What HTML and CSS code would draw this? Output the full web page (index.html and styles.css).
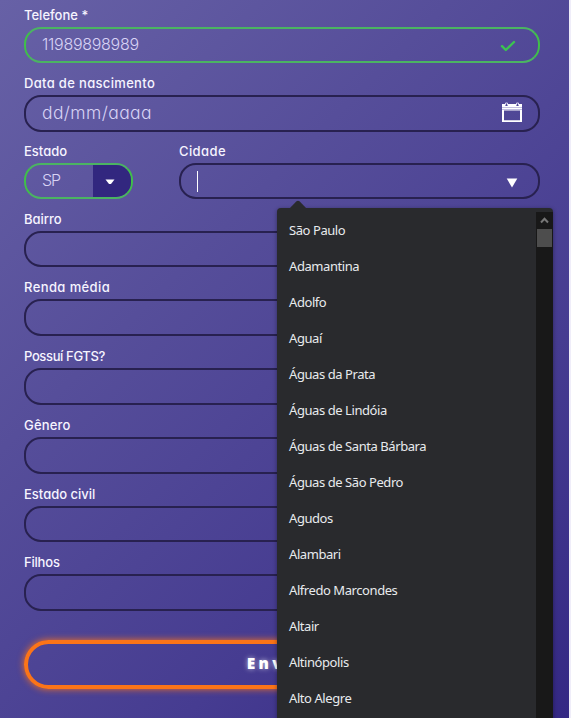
FILE: index.html
```html
<!DOCTYPE html>
<html lang="pt-BR">
<head>
<meta charset="utf-8">
<title>Cadastro</title>
<link rel="stylesheet" href="styles.css">
</head>
<body>
<main class="panel">
  <form class="form">
    <div class="field"><span class="label">Telefone *</span>
      <div class="box valid"><span class="value phone">11989898989</span>
        <svg class="check" width="16" height="12" viewBox="0 0 16 12"><path d="M2 6.200 5.800 10 14 2" fill="none" stroke="#3cc350" stroke-width="2.400" stroke-linecap="round" stroke-linejoin="round"/></svg>
      </div></div>
    <div class="field"><span class="label w-data">Data de nascimento</span>
      <div class="box tall"><span class="value date">dd/mm/aaaa</span>
        <svg class="calendar" width="20" height="20" viewBox="0 0 20 20"><path d="M0 2h3v2h3V2h8v2h3V2h3v3H0zM0 5h20v15H0zM2 8.500v9.800h16V8.500z" fill="#fff" fill-rule="evenodd"/><path d="M0 5.500h20M0 7.500h20" stroke="#a9a4d6" stroke-width=".7"/><path d="M3.500 3.500V1h2v2.500M14.500 3.500V1h2v2.500" fill="none" stroke="#d8d5f0"/></svg>
      </div></div>
    <div class="pair">
      <div class="field"><span class="label">Estado</span>
        <div class="box valid state"><span class="value uf">SP</span>
          <span class="toggle"><svg width="10" height="6" viewBox="0 0 10 6"><path d="M.5.5h9L6 5H4z" fill="#fff"/></svg></span>
        </div></div>
      <div class="field"><span class="label w-cidade">Cidade</span>
        <div class="box"><span class="caret"></span>
          <svg class="arrow" width="12" height="10" viewBox="0 0 12 10"><path d="M.7.5h10.600L6 9.500z" fill="#fff"/></svg>
        </div></div>
    </div>
    <div class="field"><span class="label">Bairro</span><div class="box"></div></div>
    <div class="field"><span class="label w-renda">Renda média</span><div class="box tall"></div></div>
    <div class="field"><span class="label w-fgts">Possuí FGTS?</span><div class="box tall"></div></div>
    <div class="field"><span class="label w-genero">Gênero</span><div class="box tall"></div></div>
    <div class="field"><span class="label">Estado civil</span><div class="box"></div></div>
    <div class="field"><span class="label w-filhos">Filhos</span><div class="box tall"></div></div>
    <button class="submit" type="button">Enviar</button>
  </form>
</main>
<div class="menu">
  <svg class="tip" width="18" height="9" viewBox="0 0 18 9"><path d="M0 9 7.500 1.300Q9 0 10.500 1.300L18 9z" fill="#292a2d"/></svg>
  <ul class="options">
    <li>São Paulo</li><li>Adamantina</li><li>Adolfo</li><li>Aguaí</li><li>Águas da Prata</li><li>Águas de Lindóia</li><li>Águas de Santa Bárbara</li><li>Águas de São Pedro</li><li>Agudos</li><li>Alambari</li><li>Alfredo Marcondes</li><li>Altair</li><li>Altinópolis</li><li>Alto Alegre</li>
  </ul>
  <div class="scrollbar">
    <svg width="9" height="7" viewBox="0 0 9 7"><path d="m1 5.500 3.500-3.700L8 5.500" fill="none" stroke="#777" stroke-width="2"/></svg>
    <div class="thumb"></div>
  </div>
</div>
</body>
</html>
```
FILE: styles.css
```css
* { box-sizing: border-box; }
body {
  margin: 0;
  height: 718px;
  overflow: hidden;
  position: relative;
  background: #efedf9;
  font-family: Inter, sans-serif;
  font-feature-settings: "cv11";
}
.panel {
  width: 569px;
  height: 718px;
  padding: 5px 29px 0 24px;
  background: linear-gradient(135deg, #6761a6 0%, #564e9a 35%, #463c91 70%, #342884 100%);
}
.form {
  display: grid;
  grid-template-rows: 68px 68px 68px 68px 69px 69px 69px 68px 87px 57px;
}
.label {
  display: block;
  height: 22px;
  line-height: 20px;
  font-size: 13px;
  font-weight: 500;
  color: #f6f4ff;
  white-space: nowrap;
}
.w-data { letter-spacing: 0.33px; }
.w-cidade { letter-spacing: 0.4px; }
.w-renda { letter-spacing: 0.4px; }
.w-fgts { letter-spacing: -0.37px; }
.w-genero { letter-spacing: 0.2px; }
.w-filhos { letter-spacing: -0.2px; }
.box {
  display: flex;
  align-items: center;
  height: 36px;
  border: 2px solid #282150;
  border-radius: 17px;
}
.tall { height: 37px; }
.valid { border-color: #40bf4a; border-top-color: #4bb462; border-bottom-color: #4bb462; }
.value {
  padding-left: 16px;
  padding-bottom: 2px;
  font-size: 16px;
  font-weight: 300;
  line-height: 30px;
  color: #d8d3f5;
  white-space: nowrap;
}
.phone { letter-spacing: -0.28px; }
.date { font-size: 17.5px; letter-spacing: 0.4px; }
.uf { letter-spacing: -1.2px; }
.check { margin-left: auto; margin-right: 22px; margin-top: 2px; }
.calendar { margin-left: auto; margin-right: 16px; margin-bottom: 3px; }
.arrow { margin-left: auto; margin-right: 20px; margin-top: 4px; }
.pair { display: grid; grid-template-columns: 109px 361px; column-gap: 46px; }
.state { overflow: hidden; }
.toggle {
  display: flex;
  align-items: center;
  justify-content: center;
  width: 38px;
  height: 32px;
  padding-right: 4px;
  padding-top: 2px;
  margin-left: auto;
  background: #32277f;
}
.caret { width: 1px; height: 21px; margin-left: 16px; background: #fff; }
.submit {
  height: 49px;
  margin-top: 1px;
  padding-bottom: 4px;
  border: 4px solid #fb7418;
  border-radius: 25px;
  background: none;
  box-shadow: 0 0 7px #f37021;
  color: #fff;
  font: 800 15.5px "Open Sans", sans-serif;
  letter-spacing: 3.4px;
  text-shadow: 0 0 5px #fffa;
}
.menu {
  position: absolute;
  left: 277px;
  top: 208px;
  width: 276px;
  height: 514px;
  display: flex;
  background: #292a2d;
  border-radius: 4px;
  box-shadow: 0 1px 4px #0006;
}
.tip { position: absolute; left: 12px; top: -8px; }
.options {
  flex: 1;
  margin: 0;
  padding: 4px 0 0 12px;
  list-style: none;
  font: 13px/36px "Noto Sans", sans-serif;
  letter-spacing: -0.43px;
  color: #e8eaed;
}
.options li { height: 36px; }
.scrollbar {
  width: 17px;
  margin-top: 4px;
  padding-top: 5px;
  display: flex;
  flex-direction: column;
  align-items: center;
  background: #181818;
}
.thumb { width: 15px; height: 18px; margin-top: 5px; background: #4d4d4d; }
```
